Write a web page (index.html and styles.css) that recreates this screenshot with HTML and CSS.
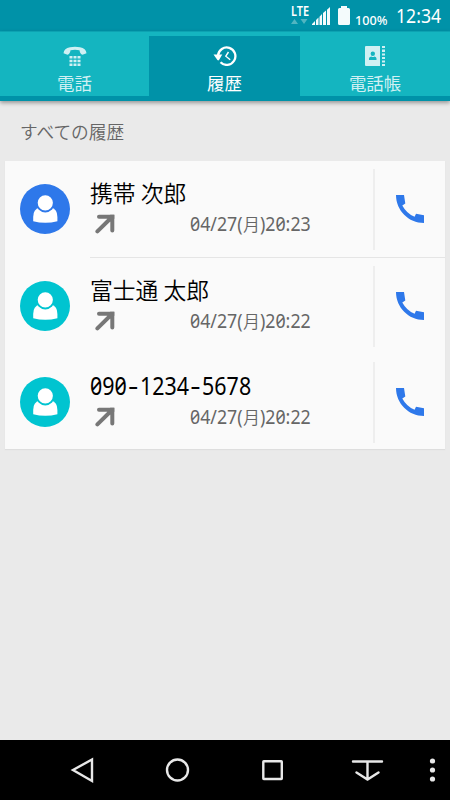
FILE: index.html
```html
<!DOCTYPE html>
<html lang="ja">
<head>
<meta charset="utf-8">
<title>履歴</title>
<link rel="stylesheet" href="styles.css">
</head>
<body>
<svg class="defs" width="0" height="0" aria-hidden="true">
  <symbol id="person" viewBox="0 0 50 50">
    <path d="M13.200 37.300V33Q13.200 25 19.500 23.500H31.300Q37.400 25 37.400 33V37.300Q25.300 40.400 13.200 37.300Z"/>
    <circle cx="25.300" cy="18.800" r="8.600" stroke="currentColor" stroke-width="2"/>
  </symbol>
  <symbol id="outgoing" viewBox="0 0 20 20">
    <path d="M4 2.700H17.300V16.500M16.500 3.500L2.400 17.400" fill="none" stroke="#777" stroke-width="4" stroke-linecap="round"/>
    <path d="M15 .7H19.300V5Z"/>
  </symbol>
  <symbol id="phone" viewBox="0 0 28 28">
    <path d="M0 0H8L9.300 8.500L6.300 10.400Q10.500 18.300 18.600 21.800L20 18.800L28 20.200V28C12.500 28 0 15.500 0 0Z"/>
  </symbol>
</svg>
<header class="status">
  <div class="network">
    <b>LTE</b>
    <svg width="17" height="5" viewBox="0 0 17 5"><path d="M0 5L3.500 0L7 5ZM9.500 0H16.500L13 5Z"/></svg>
  </div>
  <svg class="signal" width="18" height="18" viewBox="0 0 18 18"><path d="M0 18V17L3 14V18ZM4 18V13L6.500 10.500V18ZM7.500 18V9.800L10 7V18ZM11 18V6L14 3.500V18ZM15 18V2.800L18 0V18Z"/></svg>
  <svg class="battery" width="12" height="19" viewBox="0 0 12 19"><path d="M3 2V0H9V2H10.500Q12 2 12 3.500V17.500Q12 19 10.500 19H1.500Q0 19 0 17.500V3.500Q0 2 1.500 2Z"/></svg>
  <span class="percent">100%</span>
  <span class="clock">12:34</span>
</header>
<nav class="tabs">
  <div class="tab">
    <svg width="24" height="20" viewBox="0 0 24 20"><path d="M.5 7.300Q1 2.500 7 1.300Q12 .2 17 1.300Q23 2.500 23.500 7.300L19.500 8.800Q17 8 16.500 4.200Q12 3.200 7.500 4.200Q7 8 4.500 8.800ZM6.500 10h3v2.500h-3zm4 0h3v2.500h-3zm4 0h3v2.500h-3zm-8 3.700h3v2.500h-3zm4 0h3v2.500h-3zm4 0h3v2.500h-3zm-8 3.700h3v2.500h-3zm4 0h3v2.500h-3zm4 0h3v2.500h-3z"/></svg>
    <span>電話</span>
  </div>
  <div class="tab active">
    <svg width="24" height="20" viewBox="0 0 24 20"><path d="M5 9.500A8.700 8.700 0 1 1 7.500 16.300" fill="none" stroke="#fff" stroke-width="2.300"/><path d="M.5 8.500H9.300L6 14Q5.200 14.800 4.400 14Z"/><path d="M15.500 6L12.800 10.200L17.200 13.700" fill="none" stroke="#fff" stroke-width="1.400"/></svg>
    <span>履歴</span>
  </div>
  <div class="tab">
    <svg width="22" height="20" viewBox="0 0 22 20"><path fill-rule="evenodd" d="M2 0H16V20H2Q1 20 1 19V1Q1 0 2 0ZM5 14h7.500V12.500Q12.500 11 10.500 10.400Q9 11.500 7.200 10.400Q5 11 5 12.500ZM8.800 5.600A2.200 2.200 0 1 0 8.800 10A2.200 2.200 0 1 0 8.800 5.600ZM18 0h3v2h-3zm0 3.500h3v2.500h-3zm0 4h3v2h-3zm0 3.500h3v2h-3zm0 3.500h3v2h-3zm0 3.500h3v2h-3z"/></svg>
    <span>電話帳</span>
  </div>
</nav>
<main>
  <h1>すべての履歴</h1>
  <div class="list">
    <section class="row divided">
      <div class="avatar blue"><svg width="50" height="50"><use href="#person"/></svg></div>
      <div class="info">
        <div class="name">携帯 次郎</div>
        <div class="detail"><svg width="20" height="20"><use href="#outgoing"/></svg><time><i>04/27(</i>月<i>)20:23</i></time></div>
      </div>
      <div class="call"><svg width="28" height="28"><use href="#phone"/></svg></div>
    </section>
    <section class="row">
      <div class="avatar"><svg width="50" height="50"><use href="#person"/></svg></div>
      <div class="info">
        <div class="name">富士通 太郎</div>
        <div class="detail"><svg width="20" height="20"><use href="#outgoing"/></svg><time><i>04/27(</i>月<i>)20:22</i></time></div>
      </div>
      <div class="call"><svg width="28" height="28"><use href="#phone"/></svg></div>
    </section>
    <section class="row last">
      <div class="avatar"><svg width="50" height="50"><use href="#person"/></svg></div>
      <div class="info">
        <div class="name number">090<span>-</span>1234<span>-</span>5678</div>
        <div class="detail"><svg width="20" height="20"><use href="#outgoing"/></svg><time><i>04/27(</i>月<i>)20:22</i></time></div>
      </div>
      <div class="call"><svg width="28" height="28"><use href="#phone"/></svg></div>
    </section>
  </div>
</main>
<footer class="navbar">
  <svg width="95" height="60" viewBox="0 0 95 60"><path d="M57 19.500V41L38 30Z"/></svg>
  <svg width="95" height="60" viewBox="0 0 95 60"><circle cx="47.500" cy="30" r="10.500"/></svg>
  <svg width="95" height="60" viewBox="0 0 95 60"><rect x="38.300" y="21.200" width="18.500" height="17.800" rx=".5"/></svg>
  <svg width="95" height="60" viewBox="0 0 95 60"><path d="M33 21.500H62M47.500 21.500V39.500M36.500 32.500L47.500 39.500L58.500 32.500" stroke-linecap="round"/></svg>
  <svg class="more" width="35" height="60" viewBox="0 0 35 60"><circle cx="17.500" cy="21" r="2.600"/><circle cx="17.500" cy="30" r="2.600"/><circle cx="17.500" cy="39" r="2.600"/></svg>
</footer>
</body>
</html>
```
FILE: styles.css
```css
* { box-sizing: border-box; }
body {
  margin: 0;
  width: 450px;
  height: 800px;
  display: flex;
  flex-direction: column;
  overflow: hidden;
  background: #eaeaea;
  color: #000;
  font-family: "Noto Sans CJK JP", sans-serif;
}
svg { display: block; flex: none; }
.defs { position: absolute; }
.status {
  height: 31px;
  flex: none;
  background: #0092a8;
  color: #fff;
  display: flex;
  padding-left: 291px;
  font-family: "Noto Sans", sans-serif;
  white-space: nowrap;
}
.status svg { fill: #f4fbfc; }
.network { width: 21px; padding-top: 4px; flex: none; }
.network b { display: block; font: 600 13.5px/15px "Noto Sans", sans-serif; transform: scaleX(.81); transform-origin: left; }
.status .network svg { fill: #51b5c1; }
.signal { margin-top: 7px; }
.battery { margin: 6px 0 0 8px; }
.percent { width: 41px; margin-left: 5px; font: 500 13px/14px "Noto Sans", sans-serif; padding-top: 13px; flex: none; transform: scaleX(.97); transform-origin: left; }
.clock { font: 400 20.500px/28px "Noto Sans", sans-serif; padding-top: 1px; transform: scaleX(.86); transform-origin: left; }
.tabs {
  position: relative;
  height: 70px;
  flex: none;
  display: grid;
  grid-template-columns: 149px 151px 150px;
  padding-top: 4px;
  border-top: 1px solid #0da2b2;
  border-bottom: 5px solid #0092a8;
  background: #14b5c0;
  box-shadow: 0 2px 4px rgba(0, 0, 0, .35);
}
.tab {
  display: flex;
  flex-direction: column;
  align-items: center;
  padding-top: 10px;
  color: #d0f0f3;
  fill: #d0f0f3;
  font-size: 17.4px;
  line-height: 24px;
}
.tab span { margin-top: 5px; }
.active { background: #0092a8; color: #fff; fill: #fff; }
main { flex: 1; padding: 0 5px; }
h1 {
  margin: 0;
  height: 60px;
  padding: 18px 15px 0;
  color: #666;
  font-size: 17.7px;
  font-weight: 350;
  line-height: 24px;
}
.list { background: #fafafa; box-shadow: 0 1px 1px #dedede; }
.row { height: 96px; display: flex; padding-left: 15px; }
.divided { height: 97px; background: linear-gradient(#e5e5e5, #e5e5e5) 85px 100% / 400px 1px no-repeat; }
.last { height: 95px; }
.avatar { width: 50px; height: 50px; margin: 23px 20px 0 0; border-radius: 50%; color: #00c4d0; background: currentColor; fill: #fff; }
.avatar.blue { color: #2e78ea; }
.info { flex: 1; padding-top: 15px; }
.name { height: 34px; font-size: 22.8px; line-height: 34px; font-weight: 350; white-space: nowrap; }
.number { display: flex; font-family: "Noto Sans", sans-serif; font-size: 24.5px; font-weight: 400; font-feature-settings: "zero"; transform: scaleX(.875); transform-origin: left; }
.number span { width: 15px; text-align: center; transform: scaleX(1.5); }
.detail { height: 28px; display: flex; color: #666; font-size: 17px; line-height: 27px; font-weight: 350; }
.detail svg { margin: 4px 75px 0 5px; fill: #777; }
.detail time { display: flex; white-space: nowrap; }
.detail i { font: 400 19.5px/27px "Noto Sans", sans-serif; font-feature-settings: "zero"; transform: scaleX(.91); transform-origin: left; width: 53px; }
.call { width: 72px; height: 81px; margin-top: 8px; padding: 26px 0 0 21px; border-left: 2px solid #eee; fill: #2e78ea; }
.navbar { height: 60px; flex: none; display: flex; padding-left: 35px; background: #000; }
.navbar svg { fill: none; stroke: #e8e8e8; stroke-width: 2.4; }
.navbar .more { fill: #e8e8e8; stroke: none; }
```
